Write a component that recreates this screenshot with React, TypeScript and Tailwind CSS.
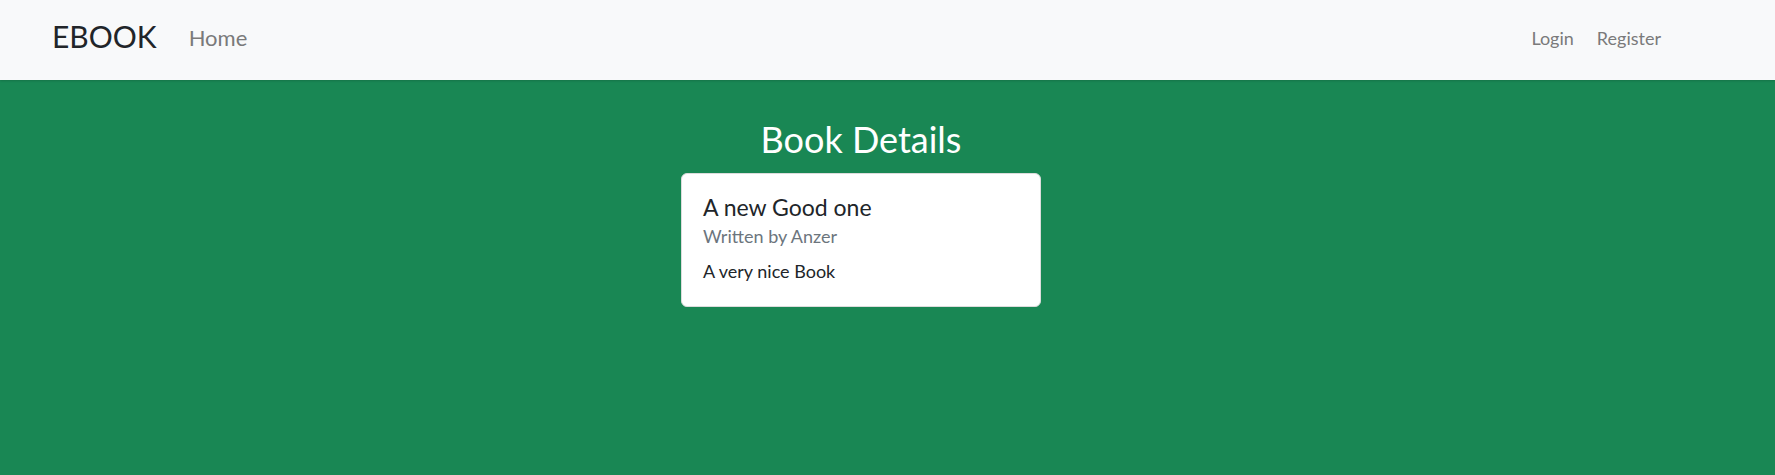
export default function App() {
  return (
    <div className="min-h-screen flex flex-col bg-[#198754]" style={{ fontFamily: 'Lato, "Noto Sans", sans-serif' }}>
      {/* navbar */}
      <nav className="h-[80px] bg-[#f8f9fa] flex items-start pl-[52px] pr-[114px] shadow-[0_1px_2px_rgba(0,0,0,0.15)]">
        <a className="text-[30px] leading-[36px] text-[#212529] mt-[18px] mr-[32px]">EBOOK</a>
        <a className="text-[22px] leading-[28px] text-[#7a7a7a] mt-[24px]">Home</a>
        <div className="flex-grow"></div>
        <a className="text-[18px] leading-[24px] text-[#7a7a7a] mt-[26px] mr-[23px]">Login</a>
        <a className="text-[18px] leading-[24px] text-[#7a7a7a] mt-[26px]">Register</a>
      </nav>

      <main className="flex flex-col items-center pr-[53px]">
        <h1 className="text-[36px] leading-[36px] text-white mt-[41px]">Book Details</h1>
        <div className="mt-[16px] w-[360px] h-[134px] bg-white rounded-[6px] border border-[#dcdcdc] px-[21px] pt-[19px]">
          <h5 className="text-[23px] leading-[28px] text-[#212529]">A new Good one</h5>
          <h6 className="text-[18px] leading-[24px] text-[#6c757d] mt-[3px]">Written by Anzer</h6>
          <p className="text-[18px] leading-[24px] text-[#212529] mt-[11px]">A very nice Book</p>
        </div>
      </main>
    </div>
  );
}
